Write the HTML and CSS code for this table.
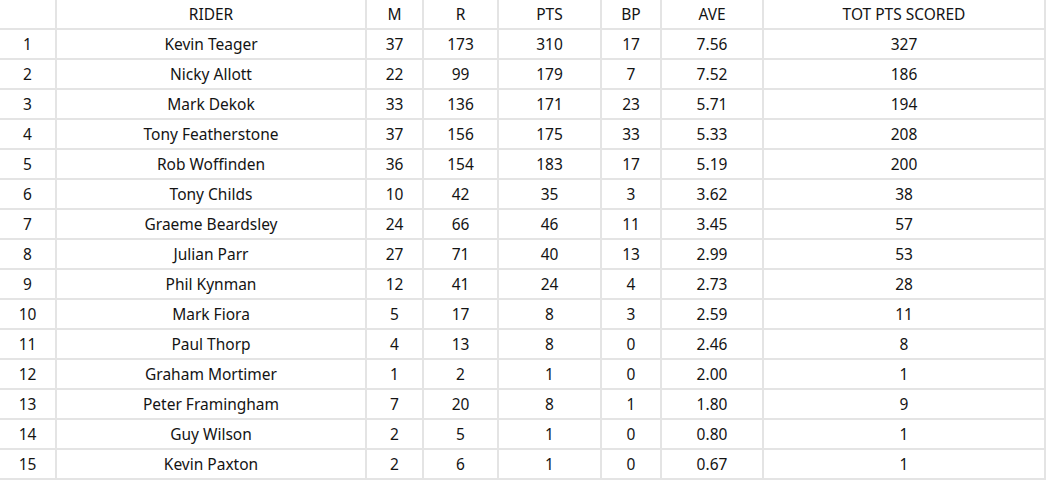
FILE: index.html
```html
<!DOCTYPE html>
<html>
<head>
<meta charset="utf-8">
<link rel="stylesheet" href="styles.css">
</head>
<body>
<table class="standings">
<colgroup>
<col class="c-pos"><col class="c-rider"><col class="c-m"><col class="c-r"><col class="c-pts"><col class="c-bp"><col class="c-ave"><col class="c-tot">
</colgroup>
<thead>
<tr><th></th><th>RIDER</th><th>M</th><th>R</th><th>PTS</th><th>BP</th><th>AVE</th><th>TOT PTS SCORED</th></tr>
</thead>
<tbody>
<tr><td>1</td><td>Kevin Teager</td><td>37</td><td>173</td><td>310</td><td>17</td><td>7.56</td><td>327</td></tr>
<tr><td>2</td><td>Nicky Allott</td><td>22</td><td>99</td><td>179</td><td>7</td><td>7.52</td><td>186</td></tr>
<tr><td>3</td><td>Mark Dekok</td><td>33</td><td>136</td><td>171</td><td>23</td><td>5.71</td><td>194</td></tr>
<tr><td>4</td><td>Tony Featherstone</td><td>37</td><td>156</td><td>175</td><td>33</td><td>5.33</td><td>208</td></tr>
<tr><td>5</td><td>Rob Woffinden</td><td>36</td><td>154</td><td>183</td><td>17</td><td>5.19</td><td>200</td></tr>
<tr><td>6</td><td>Tony Childs</td><td>10</td><td>42</td><td>35</td><td>3</td><td>3.62</td><td>38</td></tr>
<tr><td>7</td><td>Graeme Beardsley</td><td>24</td><td>66</td><td>46</td><td>11</td><td>3.45</td><td>57</td></tr>
<tr><td>8</td><td>Julian Parr</td><td>27</td><td>71</td><td>40</td><td>13</td><td>2.99</td><td>53</td></tr>
<tr><td>9</td><td>Phil Kynman</td><td>12</td><td>41</td><td>24</td><td>4</td><td>2.73</td><td>28</td></tr>
<tr><td>10</td><td>Mark Fiora</td><td>5</td><td>17</td><td>8</td><td>3</td><td>2.59</td><td>11</td></tr>
<tr><td>11</td><td>Paul Thorp</td><td>4</td><td>13</td><td>8</td><td>0</td><td>2.46</td><td>8</td></tr>
<tr><td>12</td><td>Graham Mortimer</td><td>1</td><td>2</td><td>1</td><td>0</td><td>2.00</td><td>1</td></tr>
<tr><td>13</td><td>Peter Framingham</td><td>7</td><td>20</td><td>8</td><td>1</td><td>1.80</td><td>9</td></tr>
<tr><td>14</td><td>Guy Wilson</td><td>2</td><td>5</td><td>1</td><td>0</td><td>0.80</td><td>1</td></tr>
<tr><td>15</td><td>Kevin Paxton</td><td>2</td><td>6</td><td>1</td><td>0</td><td>0.67</td><td>1</td></tr>
</tbody>
</table>
</body>
</html>
```
FILE: styles.css
```css
html, body {
  margin: 0;
  padding: 0;
  background: #ffffff;
}
.standings {
  table-layout: fixed;
  width: 1046px;
  border-collapse: separate;
  border-spacing: 0;
  font-family: "Noto Sans", "Open Sans", sans-serif;
  font-size: 15.5px;
  color: #141414;
}
.c-pos { width: 57px; }
.c-rider { width: 310px; }
.c-m { width: 57px; }
.c-r { width: 75px; }
.c-pts { width: 103px; }
.c-bp { width: 60px; }
.c-ave { width: 102px; }
.c-tot { width: 282px; }
.standings th,
.standings td {
  box-sizing: border-box;
  height: 30px;
  padding: 0;
  text-align: center;
  vertical-align: middle;
  font-weight: normal;
  border-right: 2px solid #e4e4e4;
  border-bottom: 2px solid #e4e4e4;
  line-height: 18px;
}
```
